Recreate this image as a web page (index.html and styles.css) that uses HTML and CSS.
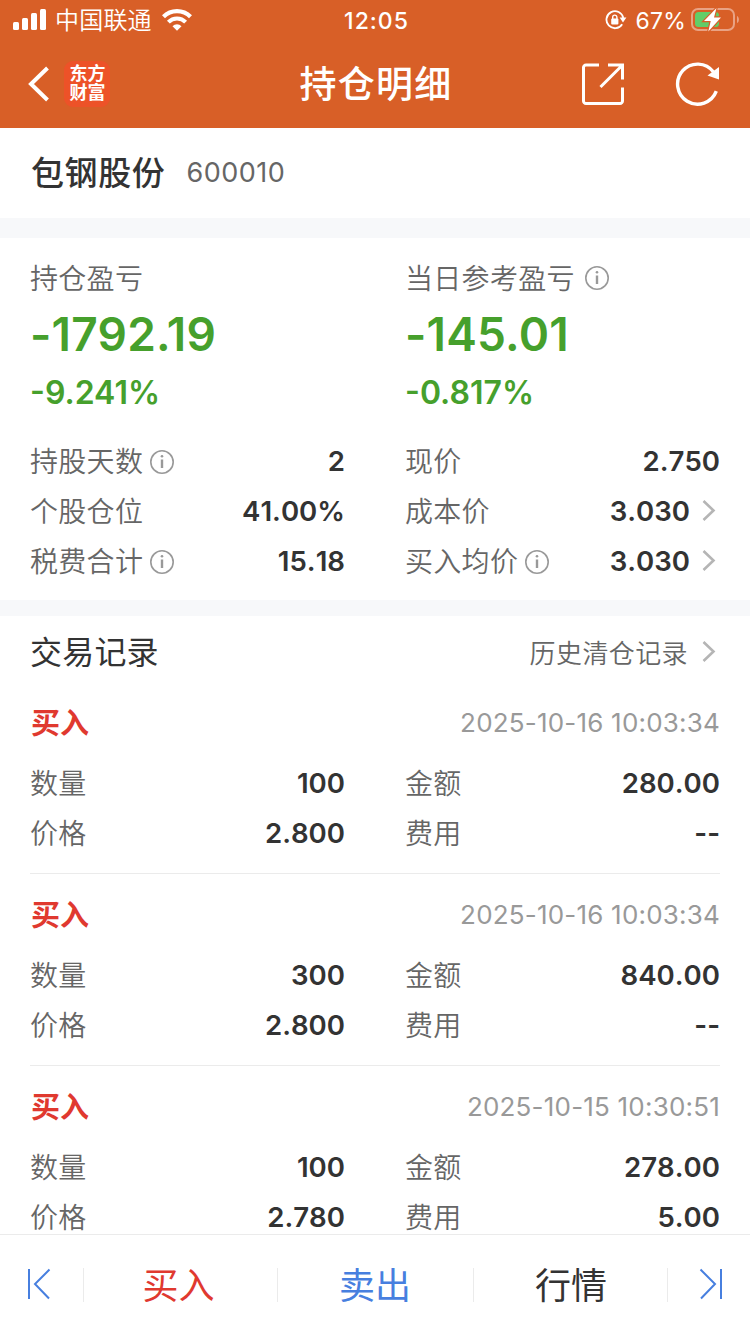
FILE: index.html
```html
<!DOCTYPE html>
<html lang="zh-CN">
<head>
  <meta charset="UTF-8">
  <meta name="viewport" content="width=750">
  <title>持仓明细</title>
  <link rel="stylesheet" href="styles.css">
</head>
<body>
<div class="page">

  <!-- Header -->
  <header class="header">
    <div class="status-bar">
      <div class="status-left">
        <svg class="signal" width="34" height="22" viewBox="0 0 34 22" fill="#fff">
          <rect x="0" y="13" width="6" height="8" rx="1.5"/>
          <rect x="9" y="9" width="6" height="12" rx="1.5"/>
          <rect x="18" y="4" width="6" height="17" rx="1.5"/>
          <rect x="27" y="0" width="6" height="21" rx="1.5"/>
        </svg>
        <span class="carrier">中国联通</span>
        <svg class="wifi" width="30" height="22" viewBox="0 0 30 22" fill="none" stroke="#fff">
          <path d="M1.500 7.800a19 19 0 0 1 27 0" stroke-width="4.200"/>
          <path d="M6.400 13.200a12 12 0 0 1 17.200 0" stroke-width="4"/>
          <path d="M15 21.800l-4.500-4.600a6.400 6.400 0 0 1 9 0z" fill="#fff" stroke="none"/>
        </svg>
      </div>
      <div class="clock">12:05</div>
      <div class="status-right">
        <svg class="rotation-lock" width="22" height="20" viewBox="0 0 22 20">
          <path d="M17.200 14.200A8.500 8.500 0 1 1 18.300 8" fill="none" stroke="#fff" stroke-width="1.800"/>
          <path d="M14.600 7.600h6.800l-3.400 4.900z" fill="#fff"/>
          <rect x="6.200" y="8.600" width="7.200" height="5.800" rx="1" fill="#fff"/>
          <path d="M7.700 9V7.200a2.100 2.100 0 0 1 4.200 0V9" fill="none" stroke="#fff" stroke-width="1.400"/>
        </svg>
        <span class="percent">67%</span>
        <svg class="battery" width="50" height="26" viewBox="0 0 50 26">
          <rect x="2" y="2" width="42" height="21" rx="6" fill="none" stroke="#e9a284" stroke-width="2"/>
          <path d="M47 9c2.600 1 2.600 6 0 7z" fill="#e9a284"/>
          <rect x="5" y="5" width="24" height="15" rx="3.500" fill="#62cd68"/>
          <path d="M26.500 1L14 14h6.700L18.300 24.500 31 10.500h-7z" fill="#fff" stroke="#d85f27" stroke-width="2.400" paint-order="stroke"/>
        </svg>
      </div>
    </div>

    <div class="nav-bar">
      <div class="nav-left">
        <svg width="22" height="36" viewBox="0 0 22 36" fill="none" stroke="#fff" stroke-width="4">
          <path d="M19.500 2L3 18l16.500 16"/>
        </svg>
        <div class="brand">东方<br>财富</div>
      </div>
      <h1 class="nav-title">持仓明细</h1>
      <div class="nav-right">
        <svg width="42" height="42" viewBox="0 0 42 42" fill="none" stroke="#fff" stroke-width="3">
          <path d="M17 2H4A2.500 2.500 0 0 0 1.500 4.500V38A2.500 2.500 0 0 0 4 40.500h34a2.500 2.500 0 0 0 2.500-2.500V24.500"/>
          <path d="M26 2h14.500V16.500M40 2.500L18.500 24"/>
        </svg>
        <svg width="46" height="46" viewBox="0 0 46 46" fill="none" stroke="#fff" stroke-width="3.400">
          <path d="M41.300 30.200A20 20 0 1 1 38.500 11"/>
          <path d="M44 6v12.500L32.500 14.500z" fill="#fff" stroke="none"/>
        </svg>
      </div>
    </div>
  </header>

  <!-- Stock -->
  <section class="stock">
    <span class="stock-name">包钢股份</span>
    <span class="stock-code">600010</span>
  </section>

  <!-- Position summary -->
  <section class="summary">
    <div class="columns">
      <div class="profit">
        <div class="label">持仓盈亏</div>
        <div class="amount">-1792.19</div>
        <div class="rate">-9.241%</div>
      </div>
      <div class="profit">
        <div class="label">当日参考盈亏
          <svg class="info info-wide" viewBox="0 0 24 24"><use href="#info"/></svg>
        </div>
        <div class="amount">-145.01</div>
        <div class="rate">-0.817%</div>
      </div>
    </div>
    <div class="columns">
      <div class="row">
        <span class="label">持股天数<svg class="info" viewBox="0 0 24 24"><use href="#info"/></svg></span>
        <span class="value">2</span>
      </div>
      <div class="row">
        <span class="label">现价</span>
        <span class="value">2.750</span>
      </div>
      <div class="row">
        <span class="label">个股仓位</span>
        <span class="value">41.00%</span>
      </div>
      <div class="row">
        <span class="label">成本价</span>
        <span class="value">3.030<svg class="arrow" viewBox="0 0 14 22"><use href="#arrow"/></svg></span>
      </div>
      <div class="row">
        <span class="label">税费合计<svg class="info" viewBox="0 0 24 24"><use href="#info"/></svg></span>
        <span class="value">15.18</span>
      </div>
      <div class="row">
        <span class="label">买入均价<svg class="info" viewBox="0 0 24 24"><use href="#info"/></svg></span>
        <span class="value">3.030<svg class="arrow" viewBox="0 0 14 22"><use href="#arrow"/></svg></span>
      </div>
    </div>
  </section>

  <!-- Trade records -->
  <section class="records">
    <div class="records-head">
      <h2>交易记录</h2>
      <a class="history">历史清仓记录<svg class="arrow" viewBox="0 0 14 22"><use href="#arrow"/></svg></a>
    </div>

    <div class="record">
      <div class="record-head"><span class="side">买入</span><time>2025-10-16 10:03:34</time></div>
      <div class="columns">
        <div class="row"><span class="label">数量</span><span class="value">100</span></div>
        <div class="row"><span class="label">金额</span><span class="value">280.00</span></div>
        <div class="row"><span class="label">价格</span><span class="value">2.800</span></div>
        <div class="row"><span class="label">费用</span><span class="value">--</span></div>
      </div>
    </div>

    <div class="record">
      <div class="record-head"><span class="side">买入</span><time>2025-10-16 10:03:34</time></div>
      <div class="columns">
        <div class="row"><span class="label">数量</span><span class="value">300</span></div>
        <div class="row"><span class="label">金额</span><span class="value">840.00</span></div>
        <div class="row"><span class="label">价格</span><span class="value">2.800</span></div>
        <div class="row"><span class="label">费用</span><span class="value">--</span></div>
      </div>
    </div>

    <div class="record">
      <div class="record-head"><span class="side">买入</span><time>2025-10-15 10:30:51</time></div>
      <div class="columns">
        <div class="row"><span class="label">数量</span><span class="value">100</span></div>
        <div class="row"><span class="label">金额</span><span class="value">278.00</span></div>
        <div class="row"><span class="label">价格</span><span class="value">2.780</span></div>
        <div class="row"><span class="label">费用</span><span class="value">5.00</span></div>
      </div>
    </div>
  </section>

  <!-- Bottom bar -->
  <nav class="bottom-bar">
    <a class="step">
      <svg width="24" height="32" viewBox="0 0 24 32" fill="none" stroke="#477fdf" stroke-width="2"><path d="M2 1v30M22.500 1.500L8 16l14 14.500"/></svg>
    </a>
    <a class="tab buy">买入</a>
    <a class="tab sell">卖出</a>
    <a class="tab quote">行情</a>
    <a class="step">
      <svg width="24" height="32" viewBox="0 0 24 32" fill="none" stroke="#477fdf" stroke-width="2"><path d="M22 1v30M1.500 1.500L16 16 2 30.500"/></svg>
    </a>
  </nav>
</div>

<!-- Shared icons -->
<svg class="symbols">
  <symbol id="info" viewBox="0 0 24 24">
    <circle cx="12" cy="12" r="11.200" fill="none" stroke="#999" stroke-width="1.600"/>
    <path d="M12 9.500V18" stroke="#999" stroke-width="2.400"/>
    <circle cx="12" cy="6.300" r="1.300" fill="#999"/>
  </symbol>
  <symbol id="arrow" viewBox="0 0 14 22">
    <path d="M1.500 1L11.500 10.500l-10 9.500" fill="none" stroke="#b5b5b5" stroke-width="2.600"/>
  </symbol>
</svg>
</body>
</html>
```
FILE: styles.css
```css
* {
  box-sizing: border-box;
}

body {
  margin: 0;
  background: #fff;
  color: #333;
  font-family: Inter, "Noto Sans CJK SC", sans-serif;
}

svg {
  display: block;
  flex: none;
}

.symbols {
  display: none;
}

.page {
  display: flex;
  flex-direction: column;
  width: 750px;
  height: 1334px;
  overflow: hidden;
}

/* Header */
.header {
  flex: none;
  height: 128px;
  background: #d85f27;
  color: #fff;
}

.status-bar,
.nav-bar {
  display: grid;
  grid-template-columns: 1fr auto 1fr;
  align-items: center;
}

.status-bar {
  height: 40px;
  padding: 0 10px 0 13px;
  font-size: 23px;
  line-height: 40px;
}

.status-left,
.status-right,
.nav-left,
.nav-right {
  display: flex;
  align-items: center;
}

.status-right,
.nav-right {
  justify-content: flex-end;
}

.carrier {
  margin: 0 10px 0 8px;
  padding-top: 2px;
  font-size: 24px;
  font-weight: 350;
  line-height: 38px;
  letter-spacing: 0.2px;
}

.clock,
.percent {
  padding-top: 2px;
  line-height: 38px;
}

.clock {
  font-weight: 500;
  letter-spacing: 1px;
}

.percent {
  margin: 0 4px 0 9px;
  letter-spacing: 0.2px;
}

.nav-bar {
  height: 88px;
  padding: 0 29px 0 28px;
}

.brand {
  width: 46px;
  height: 46px;
  margin-left: 14px;
  padding: 3px 0 0 1px;
  border-radius: 9px;
  background: #ed5228;
  font-size: 18px;
  font-weight: 700;
  line-height: 19px;
  text-align: center;
}

.nav-title {
  margin: 0;
  padding: 2px 0 0 3px;
  font-size: 37px;
  font-weight: 500;
  letter-spacing: 1.3px;
  line-height: 86px;
}

.nav-right {
  gap: 51px;
}

/* Stock */
.stock {
  display: flex;
  flex: none;
  align-items: center;
  height: 90px;
  padding: 0 31px 1px;
}

.stock-name {
  padding-bottom: 4px;
  font-size: 33px;
  font-weight: 500;
  letter-spacing: 0.6px;
}

.stock-code {
  margin-left: 21px;
  color: #666;
  font-size: 27px;
  letter-spacing: 0.5px;
}

/* Position summary */
.summary {
  flex: none;
  height: 398px;
  padding: 21px 30px 0;
  border-top: 20px solid #f7f8fa;
  border-bottom: 16px solid #f7f8fa;
}

.columns {
  display: grid;
  grid-template-columns: 1fr 1fr;
  column-gap: 60px;
}

.profit {
  height: 177px;
  font-weight: 600;
}

.label {
  display: flex;
  align-items: center;
  color: #666;
  font-size: 28px;
  font-weight: 350;
  letter-spacing: 0.3px;
  line-height: 40px;
}

.info {
  width: 24px;
  height: 24px;
  margin-left: 7px;
}

.info-wide {
  margin: 0 0 2px 10px;
}

.amount {
  margin-top: 7px;
  color: #46a02c;
  font-size: 46px;
  letter-spacing: 0.2px;
  line-height: 56px;
}

.rate {
  margin-top: 11px;
  color: #46a02c;
  font-size: 32px;
  line-height: 40px;
}

.row {
  display: flex;
  align-items: center;
  justify-content: space-between;
  height: 50px;
}

.row .label {
  padding-top: 1px;
}

.value {
  display: flex;
  align-items: center;
  font-size: 27.6px;
  font-weight: 600;
  font-kerning: none;
}

.arrow {
  width: 14px;
  height: 22px;
  margin: 0 4px 0 12px;
}

/* Trade records */
.records {
  flex: 1;
  min-height: 0;
  padding: 0 30px;
  overflow: hidden;
}

.records-head,
.record-head {
  display: flex;
  align-items: center;
  justify-content: space-between;
}

.records-head {
  height: 66px;
  padding-top: 5px;
}

.records-head h2 {
  margin: 0;
  padding-bottom: 3px;
  font-size: 32px;
  font-weight: 400;
  letter-spacing: 0.2px;
}

.history {
  display: flex;
  align-items: center;
  color: #666;
  font-size: 26px;
  font-weight: 350;
  letter-spacing: 0.4px;
}

.history .arrow {
  margin-left: 14px;
}

.record {
  height: 192px;
  padding-top: 4px;
  border-bottom: 1px solid #ebebeb;
}

.record-head {
  height: 72px;
}

.side {
  padding: 0 0 2px 1px;
  color: #e0392f;
  font-size: 29px;
  font-weight: 700;
}

.record time {
  color: #999;
  font-size: 26px;
  letter-spacing: 0.2px;
}

/* Bottom bar */
.bottom-bar {
  display: grid;
  flex: none;
  grid-template-columns: 84px 194px 196px 194px 82px;
  align-items: center;
  height: 100px;
  border-top: 1px solid #ebebeb;
}

.step,
.tab {
  display: flex;
  align-items: center;
  justify-content: center;
  height: 34px;
  border-right: 1px solid #ebebeb;
}

.step {
  padding: 0 5px 2px 0;
}

.step:last-child {
  padding: 0 0 2px 3px;
  border-right: 0;
}

.tab {
  padding-bottom: 3px;
  font-size: 36px;
}

.buy {
  padding-right: 4px;
  color: #e0392f;
}

.sell {
  padding-right: 1px;
  color: #477fdf;
}

.quote {
  padding-left: 1px;
}
```
